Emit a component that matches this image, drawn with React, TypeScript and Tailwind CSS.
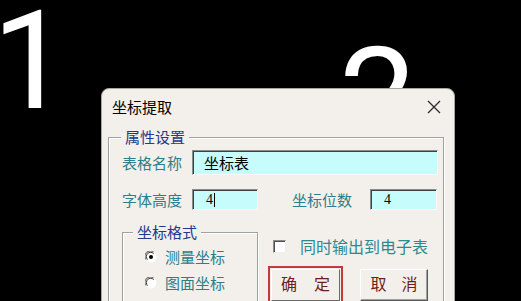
import React from 'react';

const cjk = { fontFamily: '"Noto Sans CJK SC", "Noto Sans", sans-serif' };

function Radio({ checked }: { checked?: boolean }) {
  return (
    <svg width="12" height="12" viewBox="0 0 12 12" className="shrink-0">
      <circle cx="6" cy="6" r="5.5" fill="#ffffff" />
      <path d="M1.2 8.5A5.2 5.2 0 0 1 8.5 1.2" fill="none" stroke="#7a7a7a" strokeWidth="1.2" />
      <path d="M2.6 8.6A3.8 3.8 0 0 1 8.6 2.6" fill="none" stroke="#3a3a3a" strokeWidth="1" />
      {checked && <circle cx="6" cy="6" r="2" fill="#000000" />}
    </svg>
  );
}

function SunkenInput({ children, className }: { children?: React.ReactNode; className: string }) {
  return (
    <div
      className={`flex items-center bg-[#c6fcfc] border border-t-[#8a8a8a] border-l-[#8a8a8a] border-b-[#f8f8f8] border-r-[#f8f8f8] shadow-[inset_1px_1px_0_#404040] ${className}`}
    >
      {children}
    </div>
  );
}

export default function App() {
  return (
    <div className="relative w-[521px] h-[301px] bg-black overflow-hidden font-['Roboto',sans-serif]">
      {/* slide numbers behind the dialog */}
      <div className="absolute left-[-8px] top-[-8px] text-[138px] leading-none text-white">1</div>
      <div className="absolute left-[339px] top-[29px] text-[138px] leading-none text-white">2</div>

      {/* dialog */}
      <div
        className="absolute left-[101px] top-[88px] w-[354px] h-[230px] rounded-t-[8px] bg-[#f3efea] border border-[#a9a5a0] overflow-hidden"
        style={cjk}
      >
        <div className="h-[36px] flex items-center justify-between pl-[10px] pr-[13px]">
          <span className="text-[15px] leading-[20px] text-black">坐标提取</span>
          <svg width="14" height="14" viewBox="0 0 14 14">
            <path d="M1 1L13 13M13 1L1 13" stroke="#2b2b2b" strokeWidth="1.3" />
          </svg>
        </div>

        <fieldset className="mt-[3px] ml-[6px] mr-[10px] h-[200px] border border-[#a0a0a0] shadow-[inset_1px_1px_0_#ffffff,1px_1px_0_#ffffff] pl-[13px] pr-[4px]">
          <legend className="ml-[-1px] px-[4px] text-[15px] leading-[18px] text-[#22398c] bg-[#f3efea]">
            属性设置
          </legend>

          <div className="mt-[4px] flex items-center">
            <span className="w-[70px] text-[15px] leading-[20px] text-[#2b7e8b]">表格名称</span>
            <SunkenInput className="w-[246px] h-[25px] pl-[11px]">
              <span className="text-[15px] leading-[18px] text-black">坐标表</span>
            </SunkenInput>
          </div>

          <div className="mt-[14px] flex items-center">
            <span className="w-[70px] text-[15px] leading-[20px] text-[#2b7e8b]">字体高度</span>
            <SunkenInput className="w-[66px] h-[21px] pl-[13px]">
              <span className="text-[14px] leading-[16px] text-black font-['Liberation_Serif',serif]">4</span>
              <span className="ml-[1px] w-[1px] h-[14px] bg-black" />
            </SunkenInput>
            <span className="ml-[34px] w-[78px] text-[15px] leading-[20px] text-[#2b7e8b]">坐标位数</span>
            <SunkenInput className="w-[67px] h-[21px] pl-[13px]">
              <span className="text-[14px] leading-[16px] text-black font-['Liberation_Serif',serif]">4</span>
            </SunkenInput>
          </div>

          <div className="mt-[13px] flex items-start">
            <fieldset className="w-[136px] shrink-0 h-[90px] border border-[#a0a0a0] shadow-[inset_1px_1px_0_#ffffff,1px_1px_0_#ffffff] pl-[22px]">
              <legend className="ml-[-12px] px-[4px] text-[15px] leading-[18px] text-[#22398c] bg-[#f3efea]">
                坐标格式
              </legend>
              <div className="mt-[5px] flex items-center gap-[8px]">
                <Radio checked />
                <span className="text-[15px] leading-[22px] text-[#2b7e8b]">测量坐标</span>
              </div>
              <div className="mt-[4px] flex items-center gap-[8px]">
                <Radio />
                <span className="text-[15px] leading-[22px] text-[#2b7e8b]">图面坐标</span>
              </div>
            </fieldset>

            <div className="ml-[10px] mt-[13px] flex flex-col">
              <div className="flex items-center h-[20px] pl-[5px]">
                <div className="w-[13px] h-[13px] shrink-0 bg-white border border-t-[#8a8a8a] border-l-[#8a8a8a] border-b-[#f0f0f0] border-r-[#f0f0f0] shadow-[inset_1px_1px_0_#505050]" />
                <span className="ml-[14px] whitespace-nowrap text-[16px] leading-[20px] text-[#2b8a8f]">
                  同时输出到电子表
                </span>
              </div>
              <div className="mt-[10px] flex items-start">
                <div className="border-2 border-[#c23b3b] p-[1px]">
                  <div className="w-[69px] h-[32px] flex items-start pt-[3px] justify-center gap-[17px] bg-[#f3efea] border border-t-white border-l-white border-r-[#6a6a6a] border-b-[#6a6a6a] text-[16px] leading-[20px] text-[#6e1c1c]">
                    <span>确</span>
                    <span>定</span>
                  </div>
                </div>
                <div className="ml-[17px] mt-[3px] w-[68px] h-[32px] flex items-start pt-[3px] justify-center gap-[15px] bg-[#f3efea] border border-t-white border-l-white border-r-[#5a5a5a] border-b-[#5a5a5a] shadow-[inset_-1px_-1px_0_#a0a0a0] text-[16px] leading-[20px] text-[#6e1c1c]">
                  <span>取</span>
                  <span>消</span>
                </div>
              </div>
            </div>
          </div>
        </fieldset>
      </div>
    </div>
  );
}
